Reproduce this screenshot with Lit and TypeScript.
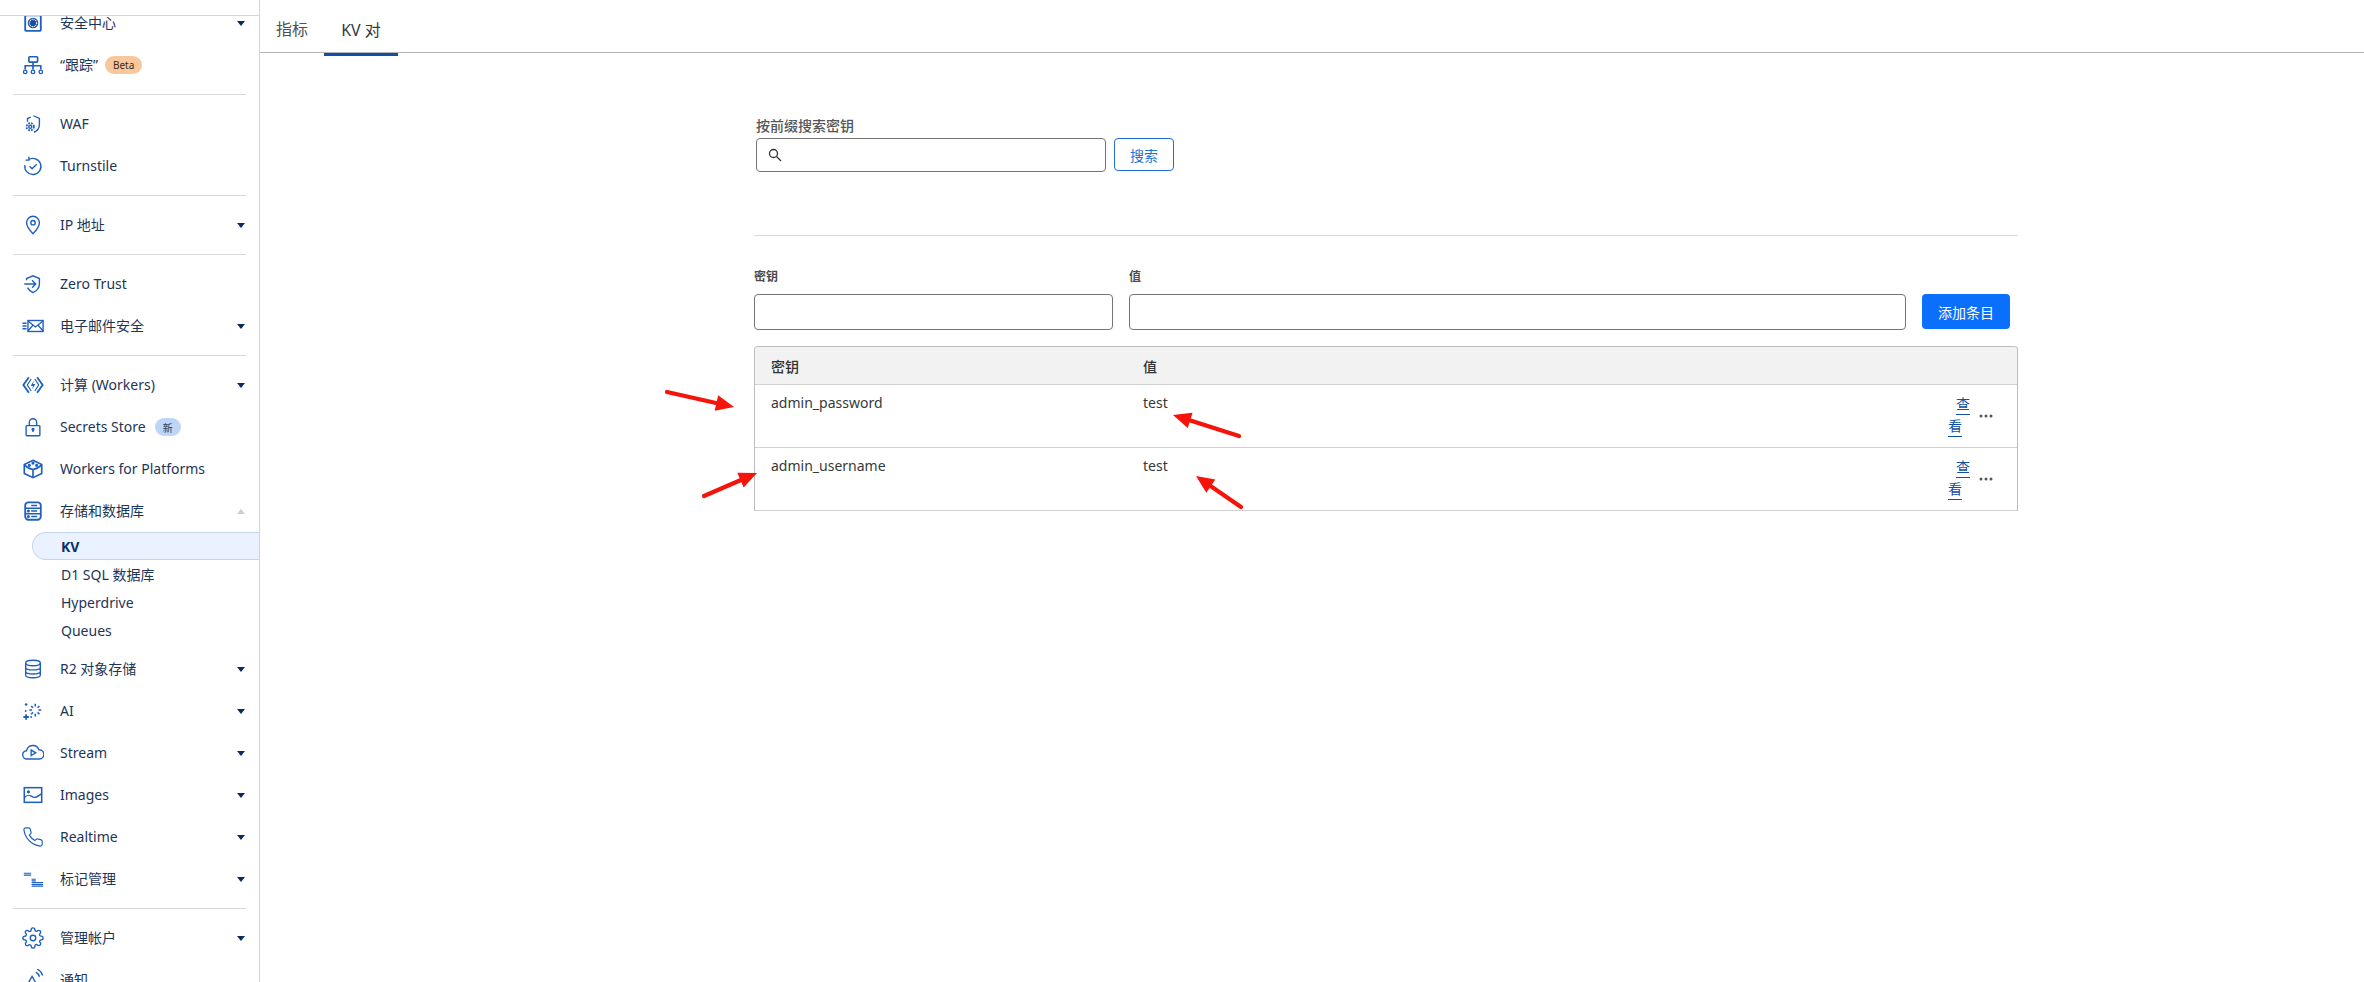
import { LitElement, html, css, svg } from "lit";
import { customElement } from "lit/decorators.js";

const B = "#1f5fbf";
const icons: Record<string, unknown> = {
  security: svg`<rect x="3.500" y="3.500" width="17" height="17" rx=".8" stroke-width="2"/><circle cx="12" cy="12" r="5.800" fill="#1d4f9c" stroke="none"/><circle cx="12" cy="12" r="4" fill="none" stroke="#fff" stroke-width="1.200" stroke-dasharray="1.200 .9"/><circle cx="12" cy="12" r="1.500" fill="#1d4f9c" stroke="none"/>`,
  trace: svg`<rect x="7.500" y="3" width="9.500" height="5.800" rx=".8" stroke-width="1.800"/><path d="M12 8.800V17M3.500 17v-4.200h17V17" stroke-width="1.800"/><circle cx="3.500" cy="19.500" r="1.900"/><circle cx="12" cy="19.500" r="1.900"/><circle cx="20.500" cy="19.500" r="1.900"/>`,
  waf: svg`<path d="M12.500 3l6.500 3v6.500c0 4-2.500 7-6 8.500M9.500 4.500L6 6v3.500"/><circle cx="9" cy="15" r="1.700"/><circle cx="9" cy="15" r="4" stroke-dasharray="2 1.200" stroke-width="1.900"/>`,
  turnstile: svg`<path d="M7 5.200A8.800 8.800 0 1 1 3.200 11M7.500 1.800v3.800H3.800"/><path d="M8.300 12.300l2.700 2.700 5-5"/>`,
  pin: svg`<path d="M12 21.500s-7-7.200-7-12a7 7 0 0 1 14 0c0 4.800-7 12-7 12z"/><circle cx="12" cy="9.500" r="2.400"/>`,
  zero: svg`<path d="M5 8V6l7-3 7 3v6c0 4.500-3 7.500-7 9.500-2.600-1.300-4.800-3.200-6-5.500"/><path d="M2.500 12H15M11 8l4 4-4 4"/>`,
  mail: svg`<rect x="6.500" y="6" width="16.500" height="12"/><path d="M6.500 6.500l8.200 6.500L23 6.500M6.500 17.500l5.500-6.500M23 17.500L17.500 11M.5 9H5M.5 12H5M.5 15H5"/>`,
  workers: svg`<path d="M7.500 3.500L1.500 12l6 8.500M16.500 3.500l6 8.500-6 8.500" stroke-width="2"/><path d="M10 5.500L5.800 12l4.200 6.500M14 5.500l4.200 6.500-4.200 6.500" stroke-width="1.300"/><path d="M13 7L9.500 13H12l-1 4 3.500-6H12z" fill="${B}" stroke="none"/>`,
  lock: svg`<rect x="4.500" y="10.500" width="15" height="11" rx=".8"/><path d="M8 10.500V7a4 4 0 0 1 8 0v3.500"/><circle cx="12" cy="14.500" r="1" fill="${B}"/><path d="M12 15v2.500"/>`,
  box: svg`<path d="M12 2.500l9.500 4.500v10L12 21.500 2.500 17V7z" stroke-width="1.800"/><path d="M2.500 7.500C5 10 8.500 12 12 12.500c3.500-.5 7-2.500 9.500-5M12 12.500v9" stroke-width="1.800"/><circle cx="12" cy="5.500" r="1" fill="${B}"/><circle cx="8" cy="8" r="1" fill="${B}"/><circle cx="16" cy="8" r="1" fill="${B}"/>`,
  storage: svg`<rect x="3.500" y="2.500" width="17" height="19" rx="3.500" stroke-width="2"/><path d="M3.500 9h17M3.500 15h17M10 6h6.500M10 12h6.500M10 18h6.500"/><circle cx="7" cy="12" r=".9" fill="${B}"/><circle cx="7" cy="18" r=".9" fill="${B}"/>`,
  db: svg`<ellipse cx="12" cy="5.500" rx="8" ry="3"/><path d="M4 5.500v13c0 1.700 3.600 3 8 3s8-1.300 8-3v-13M4 10c0 1.700 3.600 3 8 3s8-1.300 8-3M4 14.500c0 1.700 3.600 3 8 3s8-1.300 8-3"/>`,
  ai: svg`<path d="M14.500 4v3M14.500 15v3M8 11h3M18 11h3M10 6.500l2 2M19 6.500l-2 2M10 15.500l2-2M19 15.500l-2-2" stroke-width="1.700"/><path d="M4.500 15.500v6M1.500 18.500h6" stroke-width="2"/><circle cx="4.500" cy="5" r="1.400" fill="${B}" stroke="none"/><circle cx="4" cy="12" r="1" fill="${B}" stroke="none"/><circle cx="10" cy="18.500" r="1" fill="${B}" stroke="none"/>`,
  stream: svg`<path d="M6 18.500H5.500a4.500 4.500 0 0 1-.5-9 7 7 0 0 1 13.500-1 4.900 4.900 0 0 1 .5 10z"/><path d="M10 8.800v6l5-3z"/>`,
  images: svg`<rect x="2.500" y="4" width="19" height="16" stroke-width="1.700"/><circle cx="7" cy="8.500" r="1" fill="${B}"/><path d="M2.500 15c3-3.500 5-3.500 8-1.500s5 1.500 11-3"/>`,
  phone: svg`<path d="M22 16.920v3a2 2 0 0 1-2.180 2 19.790 19.790 0 0 1-8.630-3.070 19.500 19.500 0 0 1-6-6 19.790 19.790 0 0 1-3.070-8.670A2 2 0 0 1 4.110 2h3a2 2 0 0 1 2 1.720 12.840 12.840 0 0 0 .7 2.810 2 2 0 0 1-.45 2.110L8.090 9.910a16 16 0 0 0 6 6l1.270-1.270a2 2 0 0 1 2.110-.45 12.840 12.840 0 0 0 2.810.7A2 2 0 0 1 22 16.920z" stroke-width="1.300"/>`,
  flags: svg`<path d="M2 5.800h8M2 7.800h8M10.500 12.200H15M10.500 14H15M10.500 16H23M10.500 18H23M10.500 19.800H23" stroke-width="1.200"/>`,
  gear: svg`<circle cx="12" cy="12" r="3"/><path d="M19.400 15a1.650 1.650 0 0 0 .33 1.820l.06.06a2 2 0 0 1 0 2.830 2 2 0 0 1-2.830 0l-.06-.06a1.650 1.650 0 0 0-1.820-.33 1.650 1.650 0 0 0-1 1.510V21a2 2 0 0 1-2 2 2 2 0 0 1-2-2v-.09A1.650 1.650 0 0 0 9 19.400a1.650 1.650 0 0 0-1.820.33l-.06.06a2 2 0 0 1-2.830 0 2 2 0 0 1 0-2.830l.06-.06a1.650 1.650 0 0 0 .33-1.820 1.650 1.650 0 0 0-1.510-1H3a2 2 0 0 1-2-2 2 2 0 0 1 2-2h.09A1.650 1.650 0 0 0 4.600 9a1.650 1.650 0 0 0-.33-1.820l-.06-.06a2 2 0 0 1 0-2.830 2 2 0 0 1 2.830 0l.06.06a1.650 1.650 0 0 0 1.820.33H9a1.650 1.650 0 0 0 1-1.510V3a2 2 0 0 1 2-2 2 2 0 0 1 2 2v.09a1.650 1.650 0 0 0 1 1.510 1.650 1.650 0 0 0 1.820-.33l.06-.06a2 2 0 0 1 2.830 0 2 2 0 0 1 0 2.830l-.06.06a1.650 1.650 0 0 0-.33 1.820V9a1.650 1.650 0 0 0 1.510 1H21a2 2 0 0 1 2 2 2 2 0 0 1-2 2h-.09a1.650 1.650 0 0 0-1.510 1z"/>`,
  bell: svg`<path d="M3 22L11 8l8 14M15 3.500c2 1 3.500 3 4 5M16.500 0c3 1.500 5 4 6 7"/>`,
};

type Row =
  | { div: true }
  | { sub: string[] }
  | { icon: string; label: string; caret?: "down" | "up"; badge?: string; badgeKind?: string };

const rows: Row[] = [
  { icon: "security", label: "安全中心", caret: "down" },
  { icon: "trace", label: "“跟踪”", badge: "Beta", badgeKind: "beta" },
  { div: true },
  { icon: "waf", label: "WAF" },
  { icon: "turnstile", label: "Turnstile" },
  { div: true },
  { icon: "pin", label: "IP 地址", caret: "down" },
  { div: true },
  { icon: "zero", label: "Zero Trust" },
  { icon: "mail", label: "电子邮件安全", caret: "down" },
  { div: true },
  { icon: "workers", label: "计算 (Workers)", caret: "down" },
  { icon: "lock", label: "Secrets Store", badge: "新", badgeKind: "new" },
  { icon: "box", label: "Workers for Platforms" },
  { icon: "storage", label: "存储和数据库", caret: "up" },
  { sub: ["KV", "D1 SQL 数据库", "Hyperdrive", "Queues"] },
  { icon: "db", label: "R2 对象存储", caret: "down" },
  { icon: "ai", label: "AI", caret: "down" },
  { icon: "stream", label: "Stream", caret: "down" },
  { icon: "images", label: "Images", caret: "down" },
  { icon: "phone", label: "Realtime", caret: "down" },
  { icon: "flags", label: "标记管理", caret: "down" },
  { div: true },
  { icon: "gear", label: "管理帐户", caret: "down" },
  { icon: "bell", label: "通知" },
];

const kv = [
  { k: "admin_password", v: "test" },
  { k: "admin_username", v: "test" },
];

const arrows = [
  [667, 392, 734, 407],
  [1239, 436, 1173, 415],
  [704, 496, 757, 473],
  [1241, 507, 1196, 476],
];

function arrow([x1, y1, x2, y2]: number[]) {
  const a = Math.atan2(y2 - y1, x2 - x1);
  const c = Math.cos(a), s = Math.sin(a);
  const bx = x2 - c * 15, by = y2 - s * 15;
  const hw = 8;
  return svg`<line x1=${x1} y1=${y1} x2=${bx} y2=${by} stroke="#f5130a" stroke-width="4.200" stroke-linecap="round"/>
  <polygon fill="#f5130a" points="${x2},${y2} ${bx - s * hw - c * 3},${by + c * hw - s * 3} ${bx + s * hw - c * 3},${by - c * hw - s * 3}"/>`;
}

@customElement("app-root")
export class AppRoot extends LitElement {
  static styles = css`
    :host {
      display: block;
      position: relative;
      width: 2364px;
      height: 982px;
      overflow: hidden;
      background: #fff;
      font-family: "Noto Sans", "Noto Sans CJK SC", sans-serif;
      font-size: 14px;
      color: #36393a;
    }
    .page { display: flex; height: 982px; }
    .side {
      width: 259px;
      flex: none;
      border-right: 1px solid #d4d4d4;
      display: flex;
      flex-direction: column;
      overflow: hidden;
    }
    .side-top { height: 15px; flex: none; border-bottom: 1px solid #d4d4d4; background: #fff; position: relative; z-index: 1; }
    .nav { margin-top: -14px; }
    .item { height: 42px; display: flex; align-items: center; color: #1d3557; white-space: nowrap; }
    .ic { width: 22px; height: 22px; margin-left: 22px; margin-right: 16px; flex: none; fill: none; stroke: #1f5fbf; stroke-width: 1.5; }
    .label { line-height: 20px; }
    .caret { margin-left: auto; margin-right: 14px; width: 0; height: 0; border-left: 4.500px solid transparent; border-right: 4.500px solid transparent; border-top: 5px solid #0b2a5c; }
    .caret.up { border-top: 0; border-bottom: 5px solid #c9cfd6; }
    .badge { margin-left: 7px; height: 18px; border-radius: 9px; display: inline-flex; align-items: center; justify-content: center; font-size: 10px; color: #3a2a1c; }
    .beta { width: 37px; background: #f9c79c; }
    .new { width: 26px; background: #bdd5f9; margin-left: 9px; color: #2a3c55; }
    .rule { height: 1px; background: #d8d8d8; margin: 8px 13px; }
    .subs { padding-bottom: 4px; }
    .sub { height: 28px; margin-left: 32px; padding-left: 29px; display: flex; align-items: center; color: #1d3557; box-sizing: border-box; }
    .sub.active { background: #e9f2fe; border: 1px solid #c5d6f3; border-right: 0; border-radius: 14px 0 0 14px; font-weight: 700; color: #0a2f66; padding-left: 28px; }
    .main { flex: 1; min-width: 0; display: flex; flex-direction: column; }
    .tabs { height: 52px; flex: none; border-bottom: 1px solid #b5b5b5; display: flex; }
    .tab { font-size: 16px; color: #4f4f4f; display: flex; align-items: center; justify-content: center; width: 64px; padding-top: 4px; height: 48px; }
    .tab.on { border-bottom: 3px solid #0f4fa8; height: 49px; width: 74px; color: #36393a; }
    .body { margin-left: 494px; width: 1264px; }
    .search { padding-top: 63px; padding-left: 2px; }
    .flabel { display: block; font-size: 14px; line-height: 20px; font-weight: 500; color: #555; }
    .search-row { display: flex; gap: 8px; align-items: flex-start; margin-top: 2px; }
    .input { box-sizing: border-box; border: 1px solid #757575; border-radius: 4px; background: #fff; }
    .sinput { width: 350px; height: 34px; display: flex; align-items: center; padding-left: 10px; }
    .sinput svg { width: 16px; height: 16px; fill: none; stroke: #333; stroke-width: 1.300; }
    .btn { box-sizing: border-box; display: flex; align-items: center; justify-content: center; border-radius: 4px; font-size: 14px; }
    .btn.ghost { width: 60px; height: 33px; border: 1px solid #1f6fd6; color: #1f6fd6; background: #fff; }
    .btn.solid { width: 88px; height: 35px; background: #0b6ffd; color: #fff; margin-left: 16px; margin-bottom: 1px; }
    hr { border: 0; border-top: 1px solid #d9d9d9; margin: 63px 0 0; }
    .form { display: flex; margin-top: 31px; align-items: flex-end; }
    .field { display: flex; flex-direction: column; margin-right: 16px; }
    .field label { font-size: 12px; line-height: 20px; color: #4d4d4d; font-weight: 600; margin-bottom: 7px; }
    .finput { height: 36px; }
    .w1 { width: 359px; }
    .w2 { width: 777px; margin-right: 0; }
    .table { margin-top: 16px; border: 1px solid #bdbdbd; border-bottom: 1px solid #d0d0d0; border-radius: 4px 4px 0 0; }
    .tr { display: grid; grid-template-columns: 372px 1fr auto; padding-left: 16px; }
    .head { height: 37px; background: #f2f2f2; border-bottom: 1px solid #d0d0d0; font-weight: 500; align-items: center; color: #333; border-radius: 4px 4px 0 0; }
    .rw { height: 55px; padding-top: 7px; line-height: 22px; color: #36393a; }
    .rw + .rw { border-top: 1px solid #d0d0d0; }
    .actions { display: flex; align-items: flex-start; padding-right: 24px; margin-top: 2px; }
    .view { width: 22px; color: #0f4fa8; }
    .view span { display: block; width: 14px; border-bottom: 1px solid #0f4fa8; line-height: 20px; margin-bottom: 1px; font-size: 14px; }
    .view .a { margin-left: 8px; }
    .more { width: 14px; height: 4px; margin: 20px 0 0 9px; fill: #555; }
    .over { position: absolute; inset: 0; width: 2364px; height: 982px; pointer-events: none; }
  `;

  renderRow(r: Row) {
    if ("div" in r) return html`<div class="rule"></div>`;
    if ("sub" in r)
      return html`<div class="subs">${r.sub.map(
        (s, i) => html`<div class="sub ${i === 0 ? "active" : ""}">${s}</div>`
      )}</div>`;
    return html`<div class="item">
      <svg class="ic" viewBox="0 0 24 24">${icons[r.icon]}</svg>
      <span class="label">${r.label}</span>
      ${r.badge ? html`<span class="badge ${r.badgeKind}">${r.badge}</span>` : ""}
      ${r.caret ? html`<span class="caret ${r.caret === "up" ? "up" : ""}"></span>` : ""}
    </div>`;
  }

  render() {
    return html`
      <div class="page">
        <aside class="side">
          <div class="side-top"></div>
          <nav class="nav">${rows.map((r) => this.renderRow(r))}</nav>
        </aside>
        <main class="main">
          <div class="tabs">
            <div class="tab">指标</div>
            <div class="tab on">KV 对</div>
          </div>
          <div class="body">
            <div class="search">
              <span class="flabel">按前缀搜索密钥</span>
              <div class="search-row">
                <div class="input sinput">
                  <svg viewBox="0 0 16 16"><circle cx="6.500" cy="6.500" r="4"/><path d="M9.500 9.500L14 14"/></svg>
                </div>
                <div class="btn ghost">搜索</div>
              </div>
            </div>
            <hr />
            <div class="form">
              <div class="field w1"><label>密钥</label><div class="input finput"></div></div>
              <div class="field w2"><label>值</label><div class="input finput"></div></div>
              <div class="btn solid">添加条目</div>
            </div>
            <div class="table">
              <div class="tr head"><div>密钥</div><div>值</div><div></div></div>
              ${kv.map(
                (e) => html`<div class="tr rw">
                  <div>${e.k}</div>
                  <div>${e.v}</div>
                  <div class="actions">
                    <div class="view"><span class="a">查</span><span>看</span></div>
                    <svg class="more" viewBox="0 0 14 4"><circle cx="2" cy="2" r="1.500"/><circle cx="7" cy="2" r="1.500"/><circle cx="12" cy="2" r="1.500"/></svg>
                  </div>
                </div>`
              )}
            </div>
          </div>
        </main>
      </div>
      <svg class="over" viewBox="0 0 2364 982">${arrows.map(arrow)}</svg>
    `;
  }
}
